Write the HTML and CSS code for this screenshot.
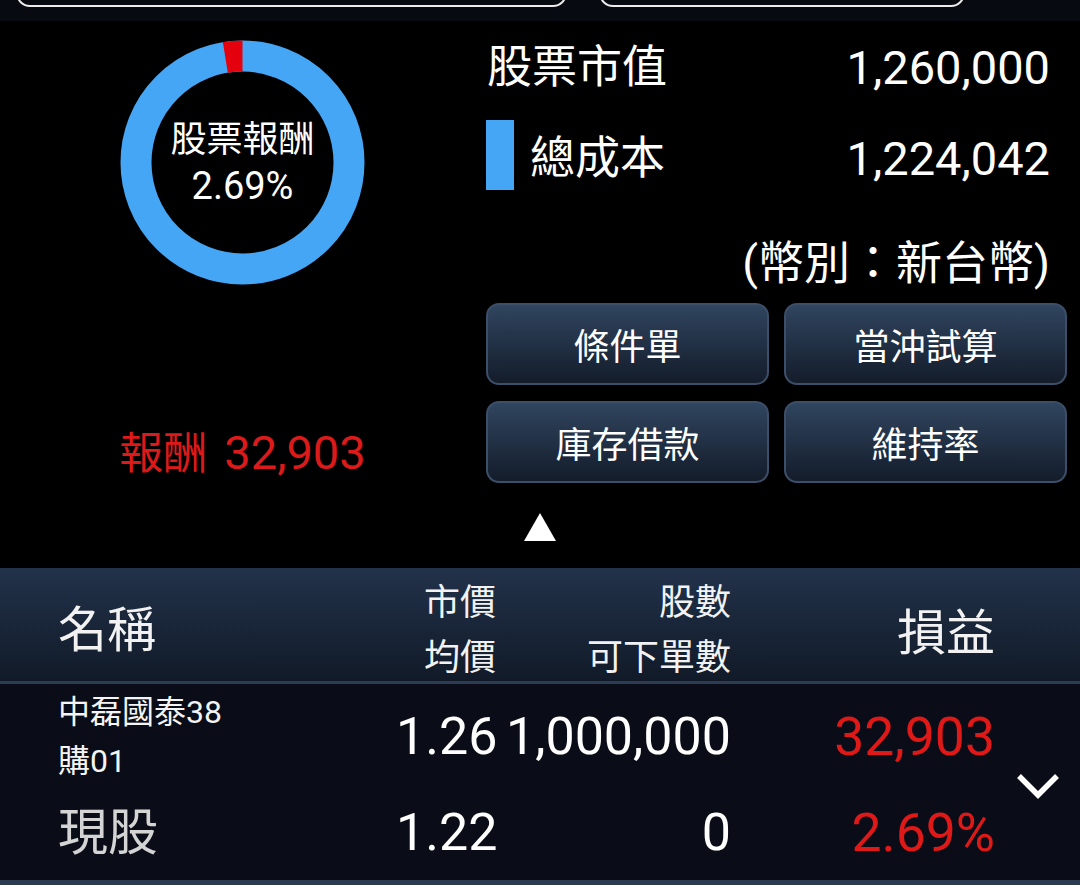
FILE: index.html
```html
<!DOCTYPE html>
<html lang="zh-Hant">
<head>
<meta charset="utf-8">
<title>庫存損益</title>
<link rel="stylesheet" href="styles.css">
</head>
<body>
<div class="topbar">
  <div class="tab tab-a"></div>
  <div class="tab tab-b"></div>
</div>

<main class="summary">
  <section class="chart-col">
    <div class="donut">
      <svg class="donut-svg" viewBox="0 0 245 245" width="245" height="245">
        <circle cx="122.5" cy="122.5" r="106.5" fill="none" stroke="#44a6f4" stroke-width="31"/>
        <circle cx="122.5" cy="122.5" r="106.5" fill="none" stroke="#e4000c" stroke-width="31"
          stroke-dasharray="18 651.2" stroke-dashoffset="18" transform="rotate(-90 122.5 122.5)"/>
      </svg>
      <div class="donut-label">
        <div class="donut-title">股票報酬</div>
        <div class="donut-pct">2.69%</div>
      </div>
    </div>
    <div class="reward"><span class="reward-label">報酬</span><span class="reward-num">32,903</span></div>
  </section>

  <section class="info-col">
    <div class="stat stat-value">
      <span class="stat-label">股票市值</span>
      <span class="stat-num">1,260,000</span>
    </div>
    <div class="stat stat-cost">
      <span class="swatch"></span>
      <span class="stat-label stat-label-cost">總成本</span>
      <span class="stat-num">1,224,042</span>
    </div>
    <div class="currency">(幣別：新台幣)</div>
    <div class="actions">
      <button class="action">條件單</button>
      <button class="action">當沖試算</button>
      <button class="action">庫存借款</button>
      <button class="action">維持率</button>
    </div>
  </section>
</main>

<div class="toggle"><span class="triangle"></span></div>

<div class="table-head">
  <div class="th th-name">名稱</div>
  <div class="th th-stack th-price"><span>市價</span><span>均價</span></div>
  <div class="th th-stack th-qty"><span>股數</span><span>可下單數</span></div>
  <div class="th th-pnl">損益</div>
</div>

<div class="table-row">
  <div class="td-name"><span>中磊國泰38</span><span>購01</span></div>
  <div class="td td-price">1.26</div>
  <div class="td td-qty">1,000,000</div>
  <div class="td td-red td-pnl">32,903</div>
  <div class="td-type">現股</div>
  <div class="td td-price2">1.22</div>
  <div class="td td-qty2">0</div>
  <div class="td td-red td-pct">2.69%</div>
  <div class="td-more">
    <svg width="46" height="30" viewBox="0 0 46 30"><polyline points="4,5 23,24 42,5" fill="none" stroke="#ffffff" stroke-width="5.5"/></svg>
  </div>
</div>
</body>
</html>
```

FILE: styles.css
```css
* { box-sizing: border-box; margin: 0; padding: 0; }

html, body {
  width: 1080px;
  height: 885px;
  overflow: hidden;
  background: #000;
}

body {
  font-family: Roboto, "Noto Sans CJK TC", "Noto Sans", sans-serif;
  color: #fff;
}

/* top strip with clipped tabs */
.topbar {
  height: 21px;
  background: #080a12;
  display: flex;
  align-items: flex-end;
  overflow: hidden;
}
.tab {
  height: 40px;
  margin-bottom: 14px;
  border: 2.5px solid #ececec;
  border-radius: 14px;
  flex: none;
}
.tab-a { margin-left: 16px; width: 551px; }
.tab-b { margin-left: 32px; width: 366px; }

/* summary */
.summary {
  display: flex;
  height: 462px;
}
.chart-col {
  width: 485px;
  display: flex;
  flex-direction: column;
  align-items: center;
}
.donut {
  margin-top: 19px;
  width: 245px;
  height: 245px;
  display: grid;
}
.donut-svg, .donut-label {
  grid-area: 1 / 1;
}
.donut-label {
  align-self: center;
  justify-self: center;
  text-align: center;
  padding-top: 1px;
}
.donut-title {
  font-size: 36px;
  line-height: 46px;
}
.donut-pct {
  font-size: 38px;
  line-height: 46px;
}
.reward {
  margin-top: 140px;
  line-height: 56px;
  color: #dc1a1a;
  white-space: nowrap;
}
.reward-label { font-size: 44px; }
.reward-num { font-size: 47px; margin-left: 17px; }

.info-col {
  width: 579px;
  margin-left: 1px;
  display: flex;
  flex-direction: column;
}
.stat {
  display: flex;
  align-items: center;
  padding-right: 15px;
}
.stat-value {
  margin-top: 14px;
  height: 60px;
  padding-left: 1px;
  padding-top: 6px;
}
.stat-cost {
  margin-top: 25px;
  height: 70px;
}
.stat-label {
  font-size: 45px;
  line-height: 60px;
}
.stat-cost .stat-label,
.stat-cost .stat-num {
  padding-top: 8px;
}
.stat-label-cost { margin-left: 16px; }
.stat-num {
  margin-left: auto;
  font-size: 47px;
  line-height: 60px;
}
.swatch {
  width: 28px;
  height: 70px;
  background: #44a6f4;
}
.currency {
  margin-top: 48px;
  height: 47px;
  line-height: 50px;
  font-size: 46px;
  text-align: right;
  padding-right: 15px;
  white-space: nowrap;
}
.actions {
  margin-top: 18px;
  display: grid;
  grid-template-columns: 283px 283px;
  column-gap: 15px;
  row-gap: 16px;
}
.action {
  height: 82px;
  border: 2px solid #3c4f69;
  border-radius: 13px;
  background: linear-gradient(#30455f, #131c2a);
  color: #fff;
  font-family: inherit;
  font-size: 36px;
  line-height: 1;
  padding-top: 8px;
}

/* toggle arrow */
.toggle {
  height: 85px;
  display: flex;
  justify-content: center;
}
.triangle {
  margin-top: 30px;
  width: 0;
  height: 0;
  border-left: 16px solid transparent;
  border-right: 16px solid transparent;
  border-bottom: 28px solid #fff;
}

/* table header */
.table-head {
  height: 116px;
  padding-top: 8px;
  background: linear-gradient(#22324a, #111a28);
  border-bottom: 3px solid #2c3c53;
  display: grid;
  grid-template-columns: 58px 338px 100px 235px 264px 85px;
  align-items: center;
  color: #f2f2f2;
}
.th-name {
  grid-column: 2;
  font-size: 49px;
  line-height: 56px;
}
.th-stack {
  display: flex;
  flex-direction: column;
  align-items: flex-end;
  font-size: 36px;
  line-height: 55px;
  white-space: nowrap;
}
.th-price { grid-column: 3; }
.th-qty { grid-column: 4; }
.th-pnl {
  grid-column: 5;
  text-align: right;
  font-size: 49px;
  line-height: 56px;
  padding-top: 6px;
}

/* table row */
.table-row {
  height: 201px;
  padding-top: 4px;
  background: #0a0d17;
  border-bottom: 5px solid #2a3a50;
  display: grid;
  grid-template-columns: 58px 338px 100px 235px 264px 85px;
  grid-template-rows: 98px 94px;
  align-items: center;
}
.td-name {
  grid-column: 2;
  grid-row: 1;
  display: flex;
  flex-direction: column;
  font-size: 32px;
  line-height: 49px;
  color: #f4f4f4;
}
.td {
  font-size: 52px;
  line-height: 60px;
  text-align: right;
  white-space: nowrap;
}
.td-red {
  font-size: 53.5px;
  color: #df1818;
}
.td-price { grid-column: 3; grid-row: 1; }
.td-qty { grid-column: 4; grid-row: 1; }
.td-pnl { grid-column: 5; grid-row: 1; }
.td-type {
  grid-column: 2;
  grid-row: 2;
  font-size: 50px;
  line-height: 60px;
  color: #d4d4d4;
}
.td-price2 { grid-column: 3; grid-row: 2; }
.td-qty2 { grid-column: 4; grid-row: 2; }
.td-pct { grid-column: 5; grid-row: 2; }
.td-more {
  grid-column: 6;
  grid-row: 1 / span 2;
  display: flex;
  justify-content: center;
  padding-top: 4px;
}
.td-more svg { display: block; }
```
